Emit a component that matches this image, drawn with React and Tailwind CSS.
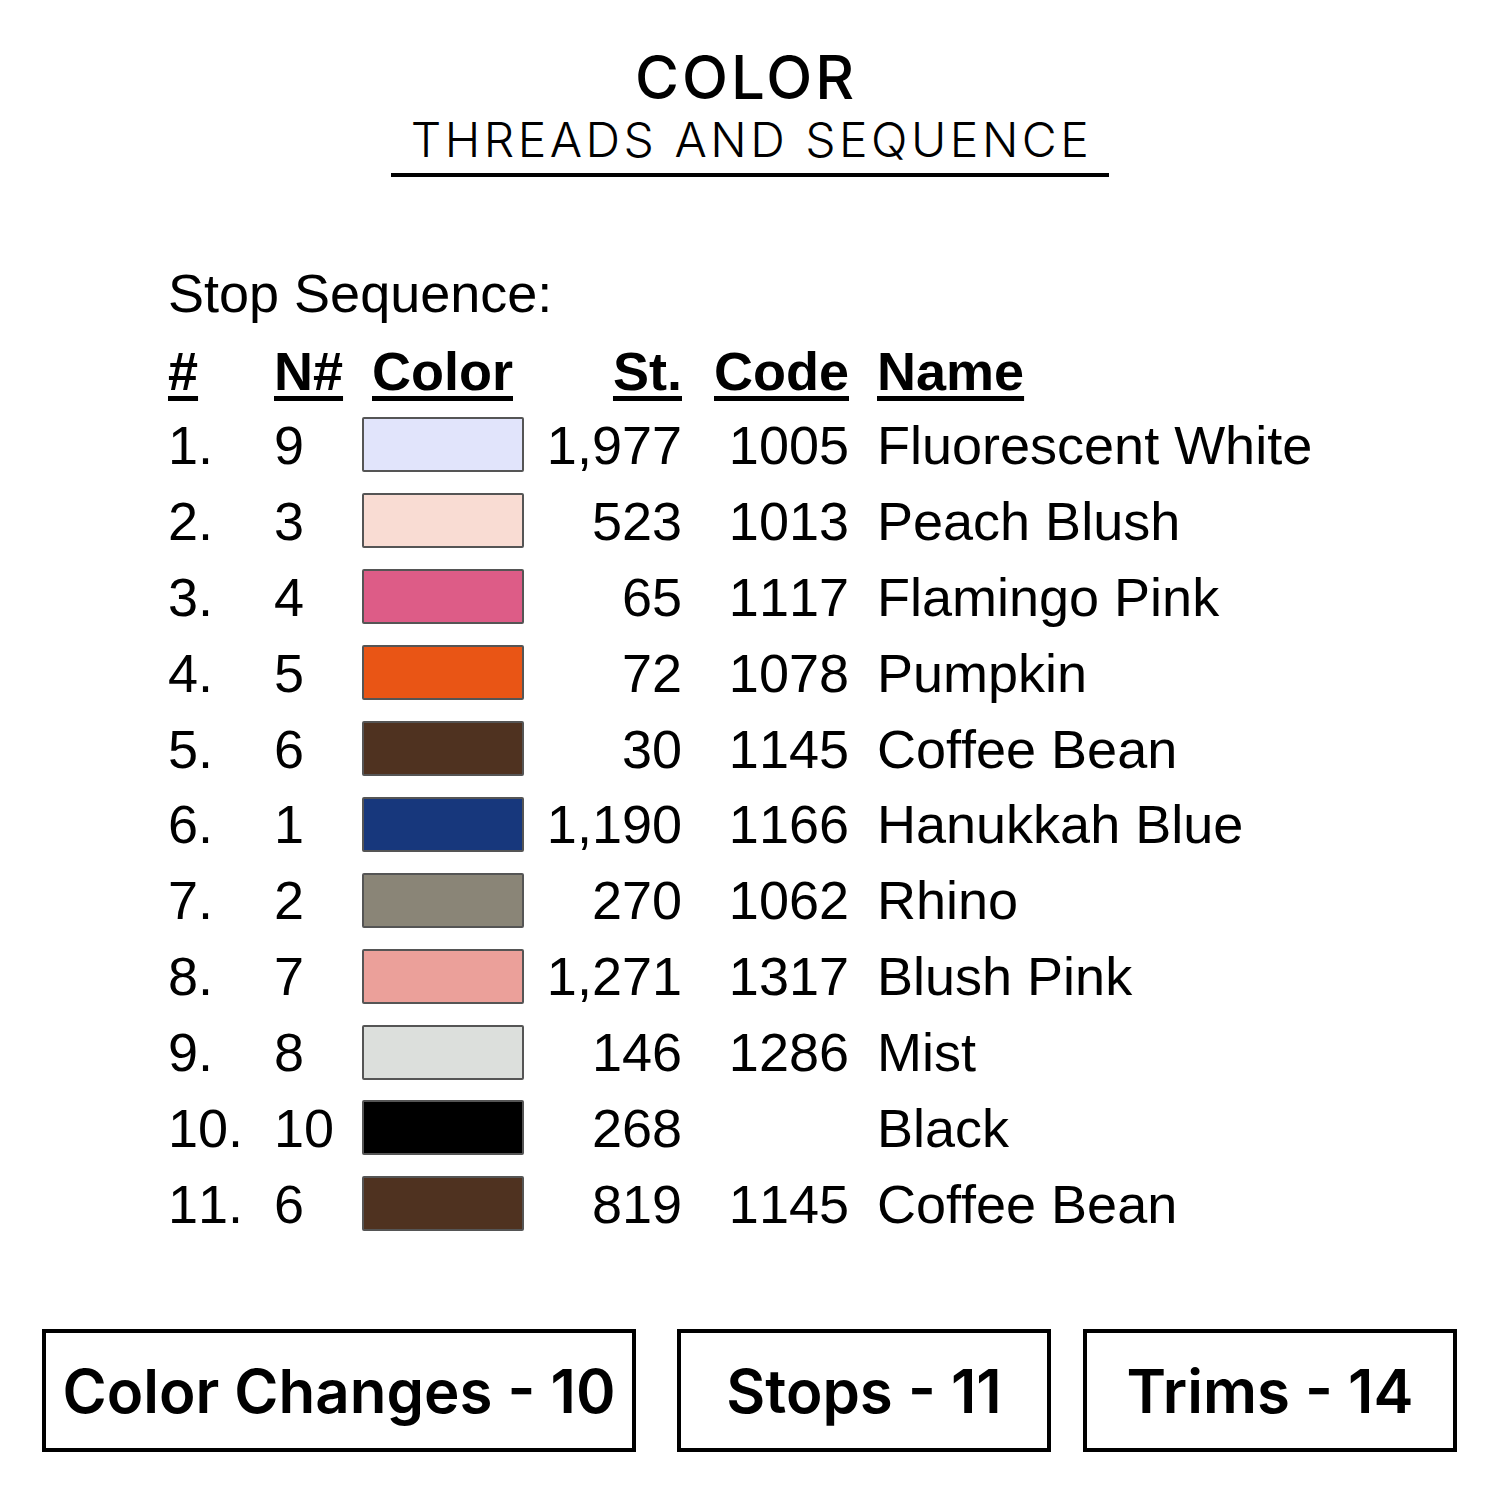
const rows = [
  { n: '1.', needle: '9', color: '#e1e4fb', st: '1,977', code: '1005', name: 'Fluorescent White' },
  { n: '2.', needle: '3', color: '#f9dcd3', st: '523', code: '1013', name: 'Peach Blush' },
  { n: '3.', needle: '4', color: '#dd5c87', st: '65', code: '1117', name: 'Flamingo Pink' },
  { n: '4.', needle: '5', color: '#e95515', st: '72', code: '1078', name: 'Pumpkin' },
  { n: '5.', needle: '6', color: '#4f3220', st: '30', code: '1145', name: 'Coffee Bean' },
  { n: '6.', needle: '1', color: '#17377c', st: '1,190', code: '1166', name: 'Hanukkah Blue' },
  { n: '7.', needle: '2', color: '#8a8577', st: '270', code: '1062', name: 'Rhino' },
  { n: '8.', needle: '7', color: '#eba09a', st: '1,271', code: '1317', name: 'Blush Pink' },
  { n: '9.', needle: '8', color: '#dcdfdc', st: '146', code: '1286', name: 'Mist' },
  { n: '10.', needle: '10', color: '#000000', st: '268', code: '', name: 'Black' },
  { n: '11.', needle: '6', color: '#4f3220', st: '819', code: '1145', name: 'Coffee Bean' },
]

const cols = 'grid grid-cols-[106px_88px_162px_158px_167px_1fr] items-center'
const head = 'font-bold underline decoration-[5px] underline-offset-[6px]'

function StatBox({ label, className }) {
  return (
    <div
      className={`flex h-[123px] items-center justify-center border-4 border-black font-['Inter',sans-serif] text-[60px] font-semibold text-black ${className}`}
    >
      {label}
    </div>
  )
}

export default function App() {
  return (
    <div className="flex h-[1500px] w-[1500px] flex-col bg-white">
      <header className="flex flex-col items-center pt-[47px] font-['Inter',sans-serif] text-black">
        <h1 className="pr-[8px] text-[60px] leading-none font-medium tracking-[3px]">COLOR</h1>
        <div className="mt-[9px] border-b-4 border-black pr-[17px] pl-[20px] pb-[9px] text-[48px] leading-none font-light tracking-[3.5px]">
          THREADS AND SEQUENCE
        </div>
      </header>

      <section className="mt-[89px] pl-[168px] font-['Liberation_Sans',Arial,sans-serif] text-[54px] leading-none text-black tabular-nums [font-kerning:none]">
        <p className="mb-[14px]">Stop Sequence:</p>
        <div className={`${cols} h-[73px]`}>
          <span className={head}>#</span>
          <span className={head}>N#</span>
          <span className={`${head} pl-[10px]`}>Color</span>
          <span className={`${head} text-right`}>St.</span>
          <span className={`${head} text-right`}>Code</span>
          <span className={`${head} pl-[28px]`}>Name</span>
        </div>
        {rows.map((r, i) => (
          <div key={i} className={`${cols} h-[75.9px]`}>
            <span>{r.n}</span>
            <span>{r.needle}</span>
            <span
              className="h-[55px] w-[162px] rounded-[2px] border-2 border-[#555]"
              style={{ backgroundColor: r.color }}
            />
            <span className="text-right">{r.st}</span>
            <span className="text-right">{r.code}</span>
            <span className="pl-[28px]">{r.name}</span>
          </div>
        ))}
      </section>

      <footer className="mt-auto mb-[48px] flex pl-[42px]">
        <StatBox label="Color Changes - 10" className="w-[594px]" />
        <StatBox label="Stops - 11" className="ml-[41px] w-[374px]" />
        <StatBox label="Trims - 14" className="ml-[32px] w-[374px]" />
      </footer>
    </div>
  )
}
